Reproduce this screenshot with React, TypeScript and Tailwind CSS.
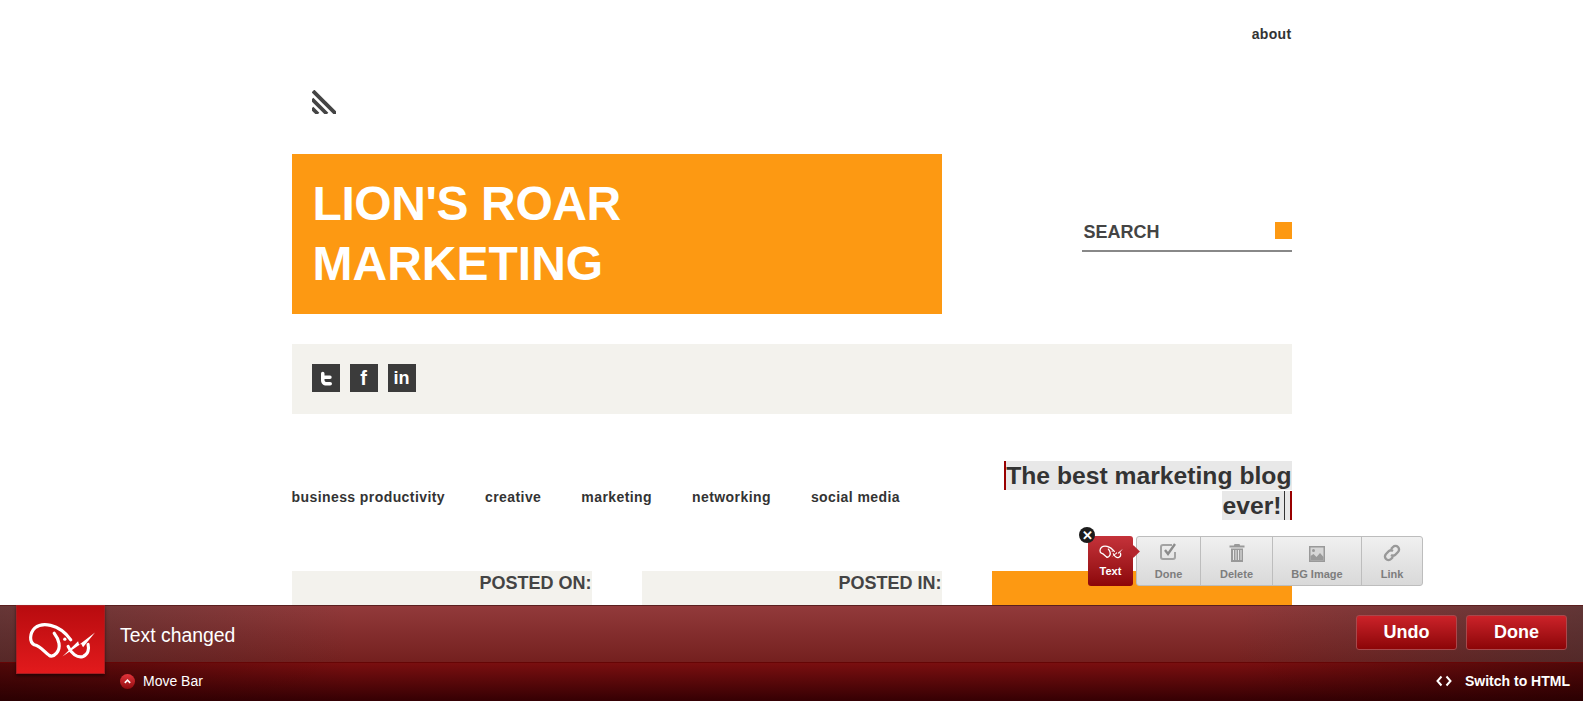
const FONT = "font-['Liberation_Sans',Arial,sans-serif]";

function ElephantLogo({ className, stroke }: { className: string; stroke: number }) {
  return (
    <svg viewBox="30 40 220 125" className={className} fill="none" stroke="#fff" strokeWidth={stroke} strokeLinecap="round" strokeLinejoin="round">
      <path d="M105 150C88 140 80 122 58 117C42 108 44 82 60 66C80 50 130 50 168 102" />
      <path d="M118 82C132 100 140 125 125 142C118 150 110 152 105 150" />
      <circle cx="150" cy="100" r="5" fill="#fff" stroke="none" />
      <path d="M160 122C168 142 188 158 205 152C220 146 224 130 220 116" />
      <path fill="#fff" stroke="none" d="M143 152L190 106L193 117L241 80L205 124L199 114Z" />
    </svg>
  );
}

function DoneIcon() {
  return (
    <svg viewBox="0 0 20 20" className="h-[20px] w-[20px]" fill="none">
      <path d="M13 3H4a2 2 0 0 0-2 2v10a2 2 0 0 0 2 2h10a2 2 0 0 0 2-2V10" stroke="#a3a3a3" strokeWidth="2" />
      <path d="M6 8l3 4 7-10" stroke="#8c8c8c" strokeWidth="2.4" />
    </svg>
  );
}

function TrashIcon() {
  return (
    <svg viewBox="0 0 16 18" className="h-[18px] w-[16px]" fill="#999">
      <path d="M5.500 0h5l.6 1.500H15.500V3.500H.5V1.500H4.900z" />
      <path fillRule="evenodd" d="M2 4.500h12V18H2zM4 6v10h1V6zm2.500 0v10h1V6zm2.500 0v10h1V6zm2.500 0v10h1V6z" />
    </svg>
  );
}

function ImageIcon() {
  return (
    <svg viewBox="0 0 16 16" className="h-[16px] w-[16px]">
      <rect width="16" height="16" fill="#999" />
      <rect x="1.500" y="1.500" width="13" height="13" fill="#d6d6d6" />
      <path d="M1.500 14.500V10l3-2 3 3 3.500-4 3.500 4v3.500z" fill="#999" />
      <circle cx="4.500" cy="4.500" r="1.500" fill="#999" />
    </svg>
  );
}

function LinkIcon() {
  return (
    <svg viewBox="0 0 18 18" className="h-[18px] w-[18px]" fill="none" stroke="#999" strokeWidth="2.400">
      <path d="M8 5l2-2a3.500 3.500 0 0 1 5 5l-3 3a3.500 3.500 0 0 1-4 0" />
      <path d="M10 13l-2 2a3.500 3.500 0 0 1-5-5l3-3a3.500 3.500 0 0 1 4 0" />
    </svg>
  );
}

function ToolButton({ label, width, icon, last }: { label: string; width: string; icon: React.ReactNode; last?: boolean }) {
  return (
    <div className={`flex flex-col items-center ${width} ${last ? "" : "border-r border-[#bdbdbd]"}`}>
      <div className="flex h-[25px] items-end justify-center">{icon}</div>
      <span className="mt-[6px] text-[11px] leading-[13px] font-bold text-[#7d7d7d]">{label}</span>
    </div>
  );
}

export default function App() {
  return (
    <div className={`relative h-[701px] overflow-hidden bg-white ${FONT}`}>
      <div className="mx-auto w-[1000px]">
        <div className="pt-[26px] text-right text-[14px] leading-4 font-bold tracking-[0.35px] text-[#333]">about</div>

        <svg viewBox="0 0 24 24" className="mt-[48px] ml-5 h-6 w-6" fill="none" stroke="#444" strokeWidth="3.800">
          <path d="M1 1l23 23" />
          <path d="M0 9l15 15" />
          <path d="M0 18l6 6" />
        </svg>

        <div className="mt-10 flex justify-between">
          <div className="h-[160px] w-[650px] bg-[#fd9912] px-[21px] py-5">
            <h1 className="text-[48px] leading-[60px] font-bold text-white">
              <span className="tracking-[-0.4px]">LION'S ROAR</span>
              <br />
              MARKETING
            </h1>
          </div>
          <div className="mt-[68px] h-[30px] w-[210px] border-b-2 border-[#888] pl-[2px]">
            <div className="flex items-start justify-between">
              <span className="text-[18px] leading-5 font-bold text-[#444]">SEARCH</span>
              <span className="h-[17px] w-[17px] bg-[#fd9912]" />
            </div>
          </div>
        </div>

        <div className="mt-[30px] flex h-[70px] gap-[10px] bg-[#f3f2ed] pt-5 pl-5">
          <div className="h-7 w-7 bg-[#3b3b3b]">
            <svg viewBox="0 0 28 28" className="h-7 w-7" fill="#fff">
              <path d="M9 9.500a1.700 1.700 0 0 1 3.500 0V11.500H18a1.700 1.700 0 0 1 0 3.400H12.500V16c0 1.500 1 2 2 2H18.200a1.800 1.800 0 0 1 0 3.600H14.500C11 21.600 9 19.500 9 16z" />
            </svg>
          </div>
          <div className="flex h-7 w-7 items-center justify-center bg-[#3b3b3b] text-[20px] leading-none font-bold text-white">f</div>
          <div className="flex h-7 w-7 items-center justify-center bg-[#3b3b3b] text-[18px] leading-none font-bold text-white">in</div>
        </div>

        <div className="mt-[47px] flex items-start justify-between">
          <nav className="mt-[28px] flex gap-10 text-[14px] leading-4 font-bold tracking-[0.42px] text-[#333]">
            <span>business productivity</span>
            <span>creative</span>
            <span>marketing</span>
            <span>networking</span>
            <span>social media</span>
          </nav>
          <h2 className="w-[300px] text-right text-[24.7px] leading-[30px] font-bold text-[#333]">
            <span className="border-x-2 border-[#900] bg-[#e8e8e8] py-[1px]">
              The best marketing blog ever!<span className="ml-[2px] border-r border-[#333] py-[1px]" />
              <span className="ml-[5px]" />
            </span>
          </h2>
        </div>

        <div className="mt-[50px] grid grid-cols-3 gap-[50px]">
          <div className="h-[60px] bg-[#f3f2ed] pt-[2px] text-right text-[18px] leading-5 font-bold text-[#444]">POSTED ON:</div>
          <div className="h-[60px] bg-[#f3f2ed] pt-[2px] text-right text-[18px] leading-5 font-bold text-[#444]">POSTED IN:</div>
          <div className="h-[60px] bg-[#fd9912]" />
        </div>
      </div>

      <div className="absolute top-[536px] left-[1088px] flex h-[50px] items-start">
        <div className="relative flex h-[50px] w-[45px] flex-col items-center rounded-[3px] bg-gradient-to-b from-[#c5323a] to-[#8c0508]">
          <ElephantLogo className="mt-[8px] h-[15px] w-[26px]" stroke={11} />
          <span className="mt-[6px] text-[11px] leading-[13px] font-bold text-white">Text</span>
          <span className="absolute top-[11px] -right-[5px] h-[9px] w-[9px] rotate-45 bg-[#b5262d]" />
        </div>
        <div className="ml-[3px] flex h-[50px] rounded-[3px] border border-[#bdbdbd] bg-gradient-to-b from-[#f0f0f0] to-[#d9d9d9]">
          <ToolButton label="Done" width="w-[64px]" icon={<DoneIcon />} />
          <ToolButton label="Delete" width="w-[72px]" icon={<TrashIcon />} />
          <ToolButton label="BG Image" width="w-[89px]" icon={<ImageIcon />} />
          <ToolButton label="Link" width="w-[60px]" icon={<LinkIcon />} last />
        </div>
        <span className="absolute -top-[9px] -left-[9px] flex h-4 w-4 items-center justify-center rounded-full bg-[#1c1c1c] text-[13px] leading-none font-bold text-white">✕</span>
      </div>

      <div className="absolute inset-x-0 bottom-0 h-[96px] text-white">
        <div className="flex h-[57px] items-center justify-between border-t border-[#5a1f1f] bg-[linear-gradient(90deg,rgba(50,50,50,0.45),transparent_22%,transparent_78%,rgba(50,50,50,0.5)),linear-gradient(#923a3b,#74201f)] pr-4 pl-[120px]">
          <span className="mt-1 text-[19.4px]">Text changed</span>
          <div className="mb-1 flex gap-[9px]">
            <button className="h-[35px] w-[101px] rounded-[3px] border border-[#a8484c] bg-gradient-to-b from-[#cc2229] to-[#8c0507] text-[18px] font-bold">Undo</button>
            <button className="h-[35px] w-[101px] rounded-[3px] border border-[#a8484c] bg-gradient-to-b from-[#cc2229] to-[#8c0507] text-[18px] font-bold">Done</button>
          </div>
        </div>
        <div className="flex h-[39px] items-center justify-between border-t border-[#660505] bg-[linear-gradient(90deg,rgba(30,0,0,0.45),transparent_22%,transparent_78%,rgba(30,0,0,0.45)),linear-gradient(#7a0f10,#350003)] pr-[13px] pb-[2px] pl-[120px]">
          <div className="flex items-center gap-2">
            <span className="flex h-[15px] w-[15px] items-center justify-center rounded-full bg-gradient-to-b from-[#e5343b] to-[#8f0a0e]">
              <svg viewBox="0 0 10 10" className="h-[9px] w-[9px]" fill="none" stroke="#fff" strokeWidth="1.800">
                <path d="M2 6.500l3-3 3 3" />
              </svg>
            </span>
            <span className="text-[14px]">Move Bar</span>
          </div>
          <div className="flex items-center gap-[13px]">
            <svg viewBox="0 0 16 12" className="h-[12px] w-[16px]" fill="none" stroke="#fff" strokeWidth="2">
              <path d="M5.500 1.500L1.500 6l4 4.500" />
              <path d="M10.500 1.500l4 4.500-4 4.500" />
            </svg>
            <span className="text-[14px] font-bold">Switch to HTML</span>
          </div>
        </div>
        <div className="absolute top-0 left-4 flex h-[69px] w-[89px] items-center justify-center border border-[#a91c20] bg-gradient-to-b from-[#b80b0f] to-[#e21a1c] pl-[2px] shadow-[0_2px_3px_rgba(0,0,0,0.5)]">
          <ElephantLogo className="h-[42px] w-[73px]" stroke={9.5} />
        </div>
      </div>
    </div>
  );
}
